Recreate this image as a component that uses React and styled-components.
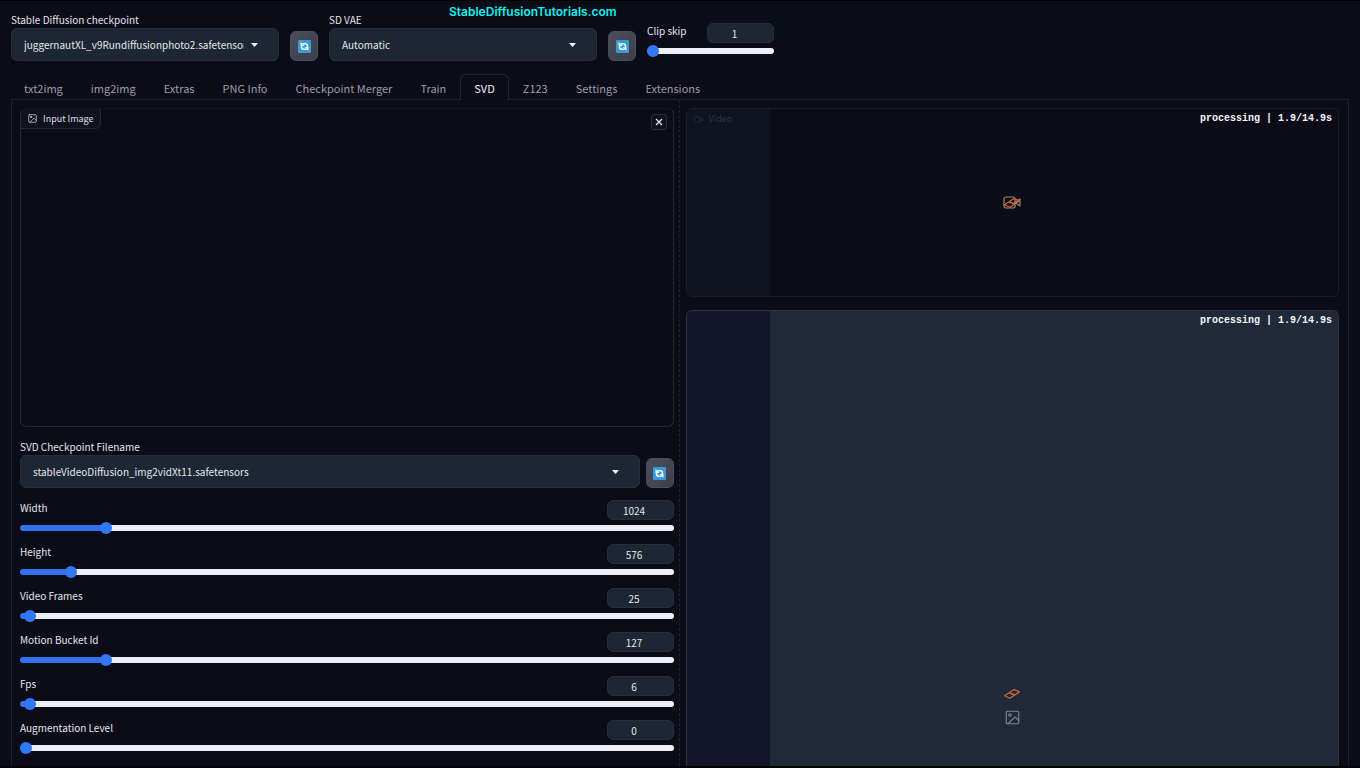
import React, { useId, useState } from "react";
import styled, { createGlobalStyle } from "styled-components";

const GlobalStyle = createGlobalStyle`
  *, *::before, *::after { box-sizing: border-box; }
  body {
    margin: 0;
    background: #0b0c17;
    color: #e3e5ec;
    font-family: "Noto Sans CJK SC", "Open Sans", sans-serif;
    font-size: 10px;
    line-height: 16px;
  }
  button, input, select { font: inherit; color: inherit; margin: 0; }
`;

const Page = styled.div`
  display: flex;
  flex-direction: column;
  min-height: 100vh;
  border-top: 1px solid #000;
  border-bottom: 2px solid #000;
`;

const Watermark = styled.a`
  position: absolute;
  top: 2px;
  left: 449px;
  color: #14f1ee;
  font-family: Inter, sans-serif;
  font-size: 12px;
  line-height: 20px;
  font-weight: 600;
  text-decoration: none;
`;

const QuickSettings = styled.header`
  display: flex;
  align-items: flex-end;
  gap: 11px;
  padding: 11px 11px 0;
`;

const Field = styled.div`
  display: flex;
  flex-direction: column;
  min-width: 0;
  flex: ${(p) => (p.$grow ? "1 1 auto" : "0 1 268px")};
`;

const Label = styled.label`
  line-height: 16px;
  white-space: nowrap;
`;

const SelectBox = styled.div`
  position: relative;
`;

const Select = styled.select`
  appearance: none;
  display: block;
  width: 100%;
  height: 33px;
  padding: 0 34px 0 12px;
  border: 1px solid #252f3c;
  border-radius: 6px;
  background: #1d2633;
`;

const Caret = styled.svg`
  position: absolute;
  top: 15px;
  right: 21px;
  width: 7px;
  height: 4px;
  fill: #f1f2f6;
  pointer-events: none;
`;

const RefreshButton = styled.button`
  display: flex;
  align-items: center;
  justify-content: center;
  flex: none;
  width: 28px;
  height: 30px;
  padding: 0;
  border: 1px solid #4b4e5b;
  border-radius: 6px;
  background: linear-gradient(to bottom right, #4b4e5b, #3c3e4b);
`;

const SliderRow = styled.div`
  display: flex;
  flex-direction: column;
  gap: 2px;
  ${(p) => p.$compact && "flex: 0 1 127px; margin-bottom: 4px;"}
`;

const SliderHead = styled.div`
  display: flex;
  align-items: flex-start;
  justify-content: space-between;
`;

const NumberInput = styled.input`
  appearance: textfield;
  width: 67px;
  height: 20px;
  padding: 0 12px 0 0;
  border: 1px solid #252f3c;
  border-radius: 6px;
  background: #1d2633;
  text-align: center;
  &::-webkit-inner-spin-button { appearance: none; margin: 0; }
`;

const Range = styled.input`
  appearance: none;
  display: block;
  width: 100%;
  height: 12px;
  background: transparent;
  &::-webkit-slider-runnable-track {
    height: 6px;
    border-radius: 3px;
    background: linear-gradient(to right, #2f72ec var(--fill), #eeeff6 var(--fill));
  }
  &::-webkit-slider-thumb {
    appearance: none;
    width: 12px;
    height: 12px;
    margin-top: -3px;
    border-radius: 50%;
    background: #3078f6;
  }
`;

const Tabs = styled.nav`
  display: flex;
  margin: 13px 10px 0;
  position: relative;
  z-index: 1;
`;

const Tab = styled.button`
  height: 26px;
  margin-bottom: -1px;
  padding: 0 13px;
  border: 1px solid ${(p) => (p.$active ? "#222530" : "transparent")};
  border-bottom: 0;
  border-radius: 6px 6px 0 0;
  background: ${(p) => (p.$active ? "#0b0c17" : "transparent")};
  color: ${(p) => (p.$active ? "#eceef4" : "#9a9ca7")};
  font-size: 11px;
  white-space: nowrap;
`;

const Panel = styled.main`
  flex: 1;
  display: grid;
  grid-template-columns: minmax(0, 1fr) minmax(0, 1fr);
  margin: 0 11px;
  padding: 0 9px 0 8px;
  border: 1px solid #1d202b;
  border-bottom: 0;
`;

const Inputs = styled.section`
  display: flex;
  flex-direction: column;
  padding: 8px 5px 10px 0;
  border-right: 1px dashed #1e222d;
`;

const Outputs = styled.section`
  display: flex;
  flex-direction: column;
  gap: 13px;
  padding: 8px 0 0 6px;
`;

const ImageDrop = styled.div`
  display: flex;
  align-items: flex-start;
  justify-content: space-between;
  height: 319px;
  border: 1px solid #222631;
  border-top-color: #12141e;
  border-radius: 6px;
`;

const BlockLabel = styled.div`
  display: flex;
  align-items: center;
  gap: 6px;
  height: 20px;
  padding: 0 6px 0 7px;
  font-size: 9px;
  svg { width: 9px; height: 9px; }
  ${(p) =>
    p.$dim
      ? "color: #2c3442; border: 0;"
      : "color: #dcdfe8; border: 1px solid #252a36; border-width: 0 1px 1px 0; border-radius: 6px 0 6px 0; background: #10131e;"}
`;

const CloseButton = styled.button`
  display: flex;
  align-items: center;
  justify-content: center;
  width: 16px;
  height: 16px;
  margin: 5px 6px;
  padding: 0;
  border: 1px solid #2b303c;
  border-radius: 3px;
  background: #0f111c;
  color: #e6e8ee;
`;

const CheckpointRow = styled.div`
  display: flex;
  align-items: flex-end;
  gap: 6px;
  margin-top: 12px;
`;

const Sliders = styled.div`
  display: flex;
  flex-direction: column;
  gap: 10px;
  margin-top: 12px;
`;

const Output = styled.div`
  position: relative;
  display: flex;
  flex-direction: column;
  border: 1px solid ${(p) => (p.$filled ? "#293442" : "#191d28")};
  border-radius: 6px;
  overflow: hidden;
  background: ${(p) => (p.$filled ? "#1f2937" : "#0b0c17")};
  ${(p) =>
    p.$filled
      ? "flex: 1; border-bottom: 0; border-radius: 6px 6px 0 0;"
      : "height: 189px;"}
`;

const Progress = styled.div`
  position: absolute;
  inset: 0 auto 0 0;
  background: ${(p) => (p.$filled ? "#14172a" : "#0d1420")};
`;

const OutputHead = styled.div`
  position: relative;
  display: flex;
  justify-content: flex-end;
  height: 20px;
  padding: 0 6px;
  ${(p) => p.$labelled && "justify-content: space-between; padding-left: 0;"}
`;

const Status = styled.span`
  color: #f4f5f9;
  font-family: "Liberation Mono", monospace;
  font-size: 10px;
  line-height: 20px;
  font-weight: 700;
  white-space: pre;
`;

const OutputBody = styled.div`
  position: relative;
  flex: 1;
  display: flex;
  flex-direction: column;
  align-items: center;
  justify-content: ${(p) => (p.$low ? "flex-end" : "center")};
  gap: 10px;
  padding-bottom: ${(p) => (p.$low ? "41px" : "20px")};
`;

const IconStack = styled.div`
  display: grid;
  place-items: center;
  color: ${(p) => p.$color};
  & > * { grid-area: 1 / 1; }
`;

function RefreshIcon() {
  return (
    <svg width="13" height="13" viewBox="0 0 26 26" aria-hidden="true">
      <rect width="26" height="26" rx="2" fill="#3b9ad3" />
      <path d="M9 7.5H14a5 5 0 0 1 5 5V14M17 18.5H12a5 5 0 0 1-5-5V12" fill="none" stroke="#effaff" strokeWidth="3" />
      <path d="M5 4V12H13ZM21 22V14H13Z" fill="#effaff" />
    </svg>
  );
}

function ImageIcon({ size = 9 }) {
  return (
    <svg width={size} height={size} viewBox="0 0 24 24" fill="none" stroke="currentColor" strokeWidth="1.8" strokeLinecap="round" strokeLinejoin="round" aria-hidden="true">
      <rect x="2" y="2" width="20" height="20" rx="2" />
      <circle cx="8" cy="8" r="2" />
      <path d="M22 17l-6-6L5 22" />
    </svg>
  );
}

function VideoIcon({ width = 10, height = 9 }) {
  return (
    <svg width={width} height={height} viewBox="0 0 18 13" fill="none" stroke="currentColor" strokeWidth="1.2" strokeLinejoin="round" aria-hidden="true">
      <rect x="1" y="1" width="11" height="11" rx="2" />
      <path d="M12 6.5L17 3v7Z" />
    </svg>
  );
}

function Loader() {
  return (
    <svg width="18" height="12" viewBox="0 0 18 12" fill="none" stroke="#cf6a3d" strokeWidth="1.2" strokeLinejoin="round" aria-hidden="true">
      <path d="M1.5 7.8L11 1.6L16.5 3.8L7 10.2Z" />
      <path d="M6.2 4.8L11.6 7" strokeWidth="1.6" />
    </svg>
  );
}

function Dropdown({ label, options, grow }) {
  const id = useId();
  return (
    <Field $grow={grow}>
      <Label htmlFor={id}>{label}</Label>
      <SelectBox>
        <Select id={id}>
          {options.map((o) => (
            <option key={o}>{o}</option>
          ))}
        </Select>
        <Caret viewBox="0 0 7 4"><path d="M0 0H7L3.5 4Z" /></Caret>
      </SelectBox>
    </Field>
  );
}

function Refresh({ label }) {
  return (
    <RefreshButton type="button" aria-label={label}>
      <RefreshIcon />
    </RefreshButton>
  );
}

function Slider({ label, initial, min = 0, max, compact }) {
  const id = useId();
  const [value, setValue] = useState(initial);
  const onChange = (e) => setValue(e.target.value);
  const part = (value - min) / (max - min);
  const fill = `calc(6px + (100% - 12px) * ${part})`;
  return (
    <SliderRow $compact={compact}>
      <SliderHead>
        <Label htmlFor={id}>{label}</Label>
        <NumberInput id={id} type="number" min={min} max={max} value={value} onChange={onChange} />
      </SliderHead>
      <Range type="range" aria-label={label} min={min} max={max} value={value} onChange={onChange} style={{ "--fill": fill }} />
    </SliderRow>
  );
}

const TABS = ["txt2img", "img2img", "Extras", "PNG Info", "Checkpoint Merger", "Train", "SVD", "Z123", "Settings", "Extensions"];

const SLIDERS = [
  { label: "Width", initial: 1024, max: 8192 },
  { label: "Height", initial: 576, max: 8192 },
  { label: "Video Frames", initial: 25, max: 4096 },
  { label: "Motion Bucket Id", initial: 127, max: 1023 },
  { label: "Fps", initial: 6, max: 1024 },
  { label: "Augmentation Level", initial: 0, max: 10 },
];

const ELAPSED = 1.9;
const ESTIMATE = 14.9;
const progressWidth = { width: `${(ELAPSED / ESTIMATE) * 100}%` };
const statusText = `processing | ${ELAPSED}/${ESTIMATE}s`;

export default function App() {
  const [tab, setTab] = useState("SVD");
  return (
    <Page>
      <GlobalStyle />
      <Watermark href="#">StableDiffusionTutorials.com</Watermark>
      <QuickSettings>
        <Dropdown label="Stable Diffusion checkpoint" options={["juggernautXL_v9Rundiffusionphoto2.safetensors"]} />
        <Refresh label="Refresh checkpoints" />
        <Dropdown label="SD VAE" options={["Automatic"]} />
        <Refresh label="Refresh VAE list" />
        <Slider label="Clip skip" initial={1} min={1} max={12} compact />
      </QuickSettings>
      <Tabs>
        {TABS.map((name) => (
          <Tab key={name} type="button" $active={name === tab} onClick={() => setTab(name)}>
            {name}
          </Tab>
        ))}
      </Tabs>
      <Panel>
        <Inputs>
          <ImageDrop>
            <BlockLabel><ImageIcon />Input Image</BlockLabel>
            <CloseButton type="button" aria-label="Clear image">
              <svg width="8" height="8" viewBox="0 0 8 8" stroke="currentColor" strokeWidth="1.2"><path d="M1 1L7 7M7 1L1 7" /></svg>
            </CloseButton>
          </ImageDrop>
          <CheckpointRow>
            <Dropdown grow label="SVD Checkpoint Filename" options={["stableVideoDiffusion_img2vidXt11.safetensors"]} />
            <Refresh label="Refresh SVD checkpoints" />
          </CheckpointRow>
          <Sliders>
            {SLIDERS.map((s) => (
              <Slider key={s.label} {...s} />
            ))}
          </Sliders>
        </Inputs>
        <Outputs>
          <Output>
            <Progress style={progressWidth} />
            <OutputHead $labelled>
              <BlockLabel $dim><VideoIcon />Video</BlockLabel>
              <Status>{statusText}</Status>
            </OutputHead>
            <OutputBody>
              <IconStack $color="#9a8878">
                <VideoIcon width={18} height={13} />
                <Loader />
              </IconStack>
            </OutputBody>
          </Output>
          <Output $filled>
            <Progress $filled style={progressWidth} />
            <OutputHead>
              <Status>{statusText}</Status>
            </OutputHead>
            <OutputBody $low>
              <Loader />
              <IconStack $color="#7d8793">
                <ImageIcon size={15} />
              </IconStack>
            </OutputBody>
          </Output>
        </Outputs>
      </Panel>
    </Page>
  );
}
